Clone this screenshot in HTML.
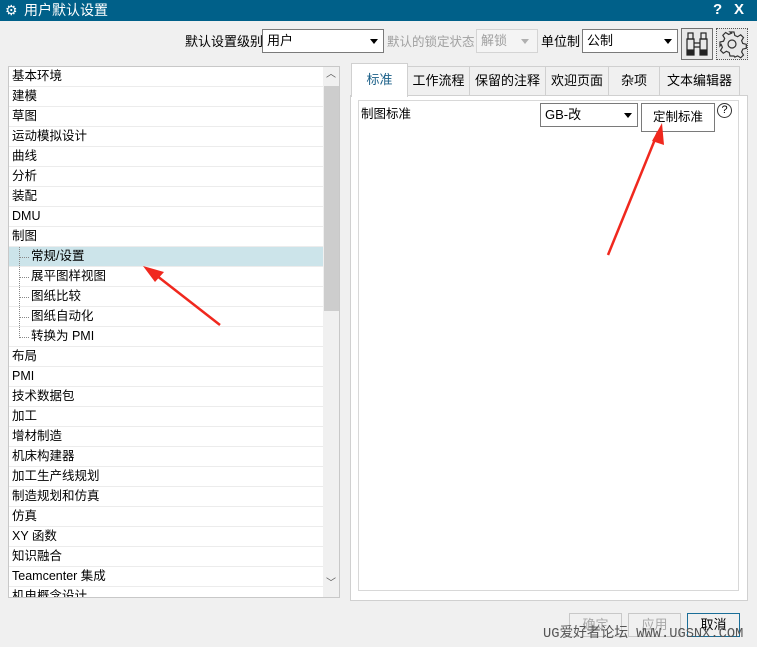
<!DOCTYPE html>
<html><head><meta charset="utf-8"><style>
*{box-sizing:border-box;margin:0;padding:0}
body{width:757px;height:647px;background:#f0f0f0;font-family:"Liberation Sans","Noto Sans CJK SC",sans-serif;font-size:12px;line-height:16px;color:#000;position:relative;overflow:hidden}
.abs{position:absolute}
.title{left:0;top:0;width:757px;height:21px;background:#006089;color:#fff;font-size:14px;line-height:20px}
.combo{background:#fff;border:1px solid #7a7a7a;height:24px;padding:0 4px;font-size:13px;line-height:22px}
.combo:after{content:"";position:absolute;right:5px;top:9px;border-left:4px solid transparent;border-right:4px solid transparent;border-top:5px solid #000}
.list{left:8px;top:66px;width:332px;height:532px;background:#fff;border:1px solid #c8c8c8;overflow:hidden}
.row{position:absolute;left:0;width:314px;height:20px;border-bottom:1px solid #ececec;padding:0 3px;font-size:12.5px;line-height:19px;white-space:nowrap}
.row.sub{padding-left:22px}
.tab{top:66px;height:30px;border:1px solid #d0d0d0;background:#f0f0f0;text-align:center;line-height:28px;font-size:13px}
.btn{top:613px;width:53px;height:24px;border:1px solid #c8c8c8;text-align:center;line-height:22px;color:#a8a8a8;font-size:13px}
.lbl{font-size:13px;line-height:16px}
</style></head><body>
<div class="abs title"><span class="abs" style="left:5px;top:0">⚙</span><span class="abs" style="left:24px;top:0">用户默认设置</span><span class="abs" style="left:713px;top:0;font-weight:bold;font-size:15px">?</span><span class="abs" style="left:734px;top:0;font-weight:bold;font-size:15px">X</span></div>

<span class="abs lbl" style="left:185px;top:34px">默认设置级别</span>
<div class="abs combo" style="left:262px;top:29px;width:122px">用户</div>
<span class="abs lbl" style="left:387px;top:34px;font-size:12.5px;color:#a0a0a0">默认的锁定状态</span>
<div class="abs" style="left:476px;top:29px;width:62px;height:24px;background:#f4f4f4;border:1px solid #d4d4d4;color:#a0a0a0;padding:0 4px;line-height:22px;font-size:13px">解锁<span class="abs" style="right:8px;top:9px;border-left:4px solid transparent;border-right:4px solid transparent;border-top:5px solid #b0b0b0"></span></div>
<span class="abs lbl" style="left:541px;top:34px">单位制</span>
<div class="abs combo" style="left:582px;top:29px;width:96px">公制</div>
<div class="abs" style="left:681px;top:28px;width:32px;height:32px;border:1px solid #707070;background:#e8e8e8">
<svg width="30" height="30" viewBox="0 0 30 30" fill="none" stroke="#222" stroke-width="1.2"><rect x="6" y="4" width="5" height="6"/><rect x="19" y="4" width="5" height="6"/><path d="M5 10h7v16H5zM18 10h7v16h-7zM12 14h6M12 18h6"/><rect x="6" y="21" width="5" height="4" fill="#222"/><rect x="19" y="21" width="5" height="4" fill="#222"/></svg></div>
<div class="abs" style="left:716px;top:28px;width:32px;height:32px;border:1px dotted #555;background:#e8e8e8">
<svg width="30" height="30" viewBox="0 0 30 30" fill="none" stroke="#333" stroke-width="1.2"><circle cx="15" cy="15" r="4"/><path d="M13 3h4l.8 3.5 2.8 1.2 3.1-1.9 2.8 2.8-1.9 3.1 1.2 2.8 3.5.8v4l-3.5.8-1.2 2.8 1.9 3.1-2.8 2.8-3.1-1.9-2.8 1.2L17 27h-4l-.8-3.5-2.8-1.2-3.1 1.9-2.8-2.8 1.9-3.1-1.2-2.8L3 17v-4l3.5-.8 1.2-2.8-1.9-3.1 2.8-2.8 3.1 1.9 2.8-1.2z"/></svg></div>

<div class="abs list">
<div class="row" style="top:0">基本环境</div>
<div class="row" style="top:20px">建模</div>
<div class="row" style="top:40px">草图</div>
<div class="row" style="top:60px">运动模拟设计</div>
<div class="row" style="top:80px">曲线</div>
<div class="row" style="top:100px">分析</div>
<div class="row" style="top:120px">装配</div>
<div class="row" style="top:140px">DMU</div>
<div class="row" style="top:160px">制图</div>
<div class="row sub" style="top:180px;background:#cce4ea">常规/设置</div>
<div class="row sub" style="top:200px">展平图样视图</div>
<div class="row sub" style="top:220px">图纸比较</div>
<div class="row sub" style="top:240px">图纸自动化</div>
<div class="row sub" style="top:260px">转换为 PMI</div>
<div class="abs" style="left:10px;top:180px;width:1px;height:91px;border-left:1px dotted #888"></div>
<div class="abs" style="left:10px;top:190px;width:10px;border-top:1px dotted #888"></div>
<div class="abs" style="left:10px;top:210px;width:10px;border-top:1px dotted #888"></div>
<div class="abs" style="left:10px;top:230px;width:10px;border-top:1px dotted #888"></div>
<div class="abs" style="left:10px;top:250px;width:10px;border-top:1px dotted #888"></div>
<div class="abs" style="left:10px;top:270px;width:10px;border-top:1px dotted #888"></div>
<div class="row" style="top:280px">布局</div>
<div class="row" style="top:300px">PMI</div>
<div class="row" style="top:320px">技术数据包</div>
<div class="row" style="top:340px">加工</div>
<div class="row" style="top:360px">增材制造</div>
<div class="row" style="top:380px">机床构建器</div>
<div class="row" style="top:400px">加工生产线规划</div>
<div class="row" style="top:420px">制造规划和仿真</div>
<div class="row" style="top:440px">仿真</div>
<div class="row" style="top:460px">XY 函数</div>
<div class="row" style="top:480px">知识融合</div>
<div class="row" style="top:500px">Teamcenter 集成</div>
<div class="row" style="top:520px">机电概念设计</div>
<div class="abs" style="left:314px;top:0;width:17px;height:530px;background:#f0f0f0"></div>
<div class="abs" style="left:315px;top:19px;width:15px;height:225px;background:#cdcdcd"></div>
<span class="abs" style="left:317px;top:3px;font-size:10px;line-height:10px;color:#555">︿</span>
<span class="abs" style="left:317px;top:512px;font-size:10px;line-height:10px;color:#555">﹀</span>
</div>

<div class="abs" style="left:350px;top:95px;width:398px;height:506px;background:#fff;border:1px solid #d0d0d0"></div>
<div class="abs" style="left:358px;top:100px;width:381px;height:491px;background:#fff;border:1px solid #d8d8d8"></div>
<div class="abs tab" style="left:351px;top:63px;height:34px;width:57px;background:#fff;border-bottom:none;color:#1a5f88;line-height:32px">标准</div>
<div class="abs tab" style="left:407px;width:63px">工作流程</div>
<div class="abs tab" style="left:469px;width:77px">保留的注释</div>
<div class="abs tab" style="left:545px;width:64px">欢迎页面</div>
<div class="abs tab" style="left:608px;width:52px">杂项</div>
<div class="abs tab" style="left:659px;width:81px">文本编辑器</div>
<span class="abs" style="left:361px;top:106px;font-size:12.5px">制图标准</span>
<div class="abs combo" style="left:540px;top:103px;width:98px">GB-改</div>
<div class="abs" style="left:641px;top:103px;width:74px;height:29px;border:1px solid #7a7a7a;background:#fff;text-align:center;line-height:27px;font-size:12.5px">定制标准</div>
<div class="abs" style="left:717px;top:103px;width:15px;height:15px;border:1px solid #333;border-radius:50%;text-align:center;font-size:11px;line-height:13px">?</div>

<div class="abs btn" style="left:569px">确定</div>
<div class="abs btn" style="left:628px">应用</div>
<div class="abs btn" style="left:687px;border-color:#1a6e98;color:#000">取消</div>
<span class="abs" style="left:543px;top:626px;font-family:'Liberation Mono','Noto Sans CJK SC',monospace;font-size:14px;line-height:16px;color:#555;transform:scaleX(0.98);transform-origin:left">UG爱好者论坛 WWW.UGSNX.COM</span>

<svg class="abs" style="left:0;top:0" width="757" height="647">
<path d="M220 325 L152 272" stroke="#f0281e" stroke-width="2.5"/>
<path d="M143 266 L164 272 L155 282Z" fill="#f0281e"/>
<path d="M608 255 L658 132" stroke="#f0281e" stroke-width="2.5"/>
<path d="M662 123 L664 145 L652 141Z" fill="#f0281e"/>
</svg>
</body></html>
